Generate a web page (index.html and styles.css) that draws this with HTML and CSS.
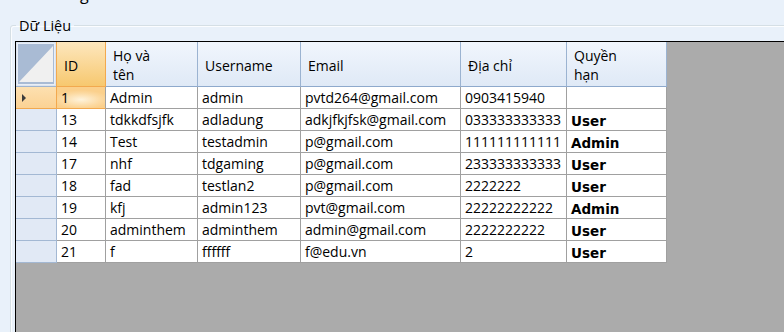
FILE: index.html
```html
<!DOCTYPE html>
<html lang="vi">
<head>
<meta charset="utf-8">
<title>Dữ Liệu</title>
<link rel="stylesheet" href="styles.css">
</head>
<body>
<div class="title">Thông tin tài khoản</div>
<fieldset class="group">
  <legend>Dữ Liệu</legend>
  <div class="grid-view">
    <div class="dgv" role="table">
      <div class="row" role="row">
        <div class="corner"><svg width="41" height="45" viewBox="0 0 41 45"><rect x="0" y="0" width="40" height="44" fill="#dbe4f0"/><rect x="1" y="1" width="38" height="42" fill="#e9eef6"/><rect x="2" y="2" width="36" height="40" fill="#a9bbd4"/><polygon points="37,4 37,40 3,40" fill="#f0f0f0"/><rect x="40" y="0" width="1" height="45" fill="#f2a94f"/><rect x="0" y="44" width="40" height="1" fill="#9fb4cf"/></svg></div>
        <div class="hcell sel" role="columnheader">ID</div>
        <div class="hcell" role="columnheader">Họ và<br>tên</div>
        <div class="hcell" role="columnheader">Username</div>
        <div class="hcell" role="columnheader">Email</div>
        <div class="hcell" role="columnheader">Địa chỉ</div>
        <div class="hcell" role="columnheader">Quyền<br>hạn</div>
      </div>
      <div class="row" role="row">
        <div class="rh current"><span class="arrow"></span></div>
        <div class="cell cur">1</div><div class="cell">Admin</div><div class="cell">admin</div><div class="cell">pvtd264@gmail.com</div><div class="cell">0903415940</div><div class="cell role"></div>
      </div>
      <div class="row" role="row">
        <div class="rh"></div>
        <div class="cell">13</div><div class="cell">tdkkdfsjfk</div><div class="cell">adladung</div><div class="cell">adkjfkjfsk@gmail.com</div><div class="cell">033333333333</div><div class="cell role">User</div>
      </div>
      <div class="row" role="row">
        <div class="rh"></div>
        <div class="cell">14</div><div class="cell">Test</div><div class="cell">testadmin</div><div class="cell">p@gmail.com</div><div class="cell">111111111111</div><div class="cell role">Admin</div>
      </div>
      <div class="row" role="row">
        <div class="rh"></div>
        <div class="cell">17</div><div class="cell">nhf</div><div class="cell">tdgaming</div><div class="cell">p@gmail.com</div><div class="cell">233333333333</div><div class="cell role">User</div>
      </div>
      <div class="row" role="row">
        <div class="rh"></div>
        <div class="cell">18</div><div class="cell">fad</div><div class="cell">testlan2</div><div class="cell">p@gmail.com</div><div class="cell">2222222</div><div class="cell role">User</div>
      </div>
      <div class="row" role="row">
        <div class="rh"></div>
        <div class="cell">19</div><div class="cell">kfj</div><div class="cell">admin123</div><div class="cell">pvt@gmail.com</div><div class="cell">22222222222</div><div class="cell role">Admin</div>
      </div>
      <div class="row" role="row">
        <div class="rh"></div>
        <div class="cell">20</div><div class="cell">adminthem</div><div class="cell">adminthem</div><div class="cell">admin@gmail.com</div><div class="cell">2222222222</div><div class="cell role">User</div>
      </div>
      <div class="row" role="row">
        <div class="rh"></div>
        <div class="cell">21</div><div class="cell">f</div><div class="cell">ffffff</div><div class="cell">f@edu.vn</div><div class="cell">2</div><div class="cell role">User</div>
      </div>
    </div>
  </div>
</fieldset>
</body>
</html>
```

FILE: styles.css
```css
html, body {
  margin: 0;
  padding: 0;
}
body {
  width: 784px;
  height: 332px;
  overflow: hidden;
  background: #e9f1fa;
  font-family: "Open Sans", "Noto Sans", sans-serif;
  font-size: 14px;
  color: #000;
}
.title {
  height: 20px;
  line-height: 20px;
  margin-top: -16px;
  padding-left: 42px;
  font-size: 16px;
  white-space: nowrap;
}
.group {
  margin: 12px -40px 0 10px;
  padding: 0 0 0 4px;
  min-width: 0;
  height: 400px;
  border: 1px solid #d5dfe5;
  border-radius: 3px;
  box-shadow: inset 1px 1px 0 #fbfdff;
}
.group legend {
  margin-left: 1px;
  padding: 0 3px;
  font-size: 14.5px;
  line-height: 19px;
}
.grid-view {
  margin-top: 6px;
  height: 400px;
  background: #ababab;
  border-left: 1px solid #000;
  border-top: 1px solid #000;
}
.dgv {
  display: grid;
  grid-template-columns: 41px 49px 92px 103px 160px 106px 100px;
  grid-template-rows: 45px repeat(8, 22px);
  width: max-content;
}
.row {
  display: contents;
}
.corner {
  width: 41px;
  height: 45px;
}
.corner svg {
  display: block;
}
.hcell {
  box-sizing: border-box;
  display: flex;
  align-items: center;
  padding: 2px 4px 0 7px;
  background: linear-gradient(#f1f6fd, #dfe9f6);
  border-right: 1px solid #9bb3d1;
  border-bottom: 1px solid #8ea9cc;
  line-height: 19px;
}
.hcell.sel {
  background: linear-gradient(#fde7be, #f7c86f);
  border-right: 1px solid #f2a94f;
  border-bottom: 1px solid #f2a94f;
}
.rh {
  box-sizing: border-box;
  display: flex;
  align-items: center;
  padding-left: 6px;
  background: #e1e9f5;
  border-right: 1px solid #a3b8d3;
  border-bottom: 1px solid #a3b8d3;
}
.rh.current {
  background: linear-gradient(#fde0b0, #fbd294);
  border-right-color: #f2a94f;
  border-bottom-color: #f2a94f;
}
.arrow {
  width: 0;
  height: 0;
  border-left: 4px solid #3c3c3c;
  border-top: 4px solid transparent;
  border-bottom: 4px solid transparent;
}
.cell {
  box-sizing: border-box;
  padding: 1px 2px 0 4px;
  background: #fff;
  border-right: 1px solid #a0a0a0;
  border-bottom: 1px solid #a0a0a0;
  line-height: 20px;
  white-space: nowrap;
  overflow: hidden;
}
.cell.cur {
  background: radial-gradient(ellipse 60% 45% at 50% 60%, #fef3dc 0%, #fcd9a0 70%, #fbd08c 100%);
  border-bottom-color: #f2a94f;
}
.cell.role {
  padding-top: 3px;
  font-family: "DejaVu Sans", sans-serif;
  font-weight: bold;
  font-size: 13.5px;
  line-height: 18px;
}
```
